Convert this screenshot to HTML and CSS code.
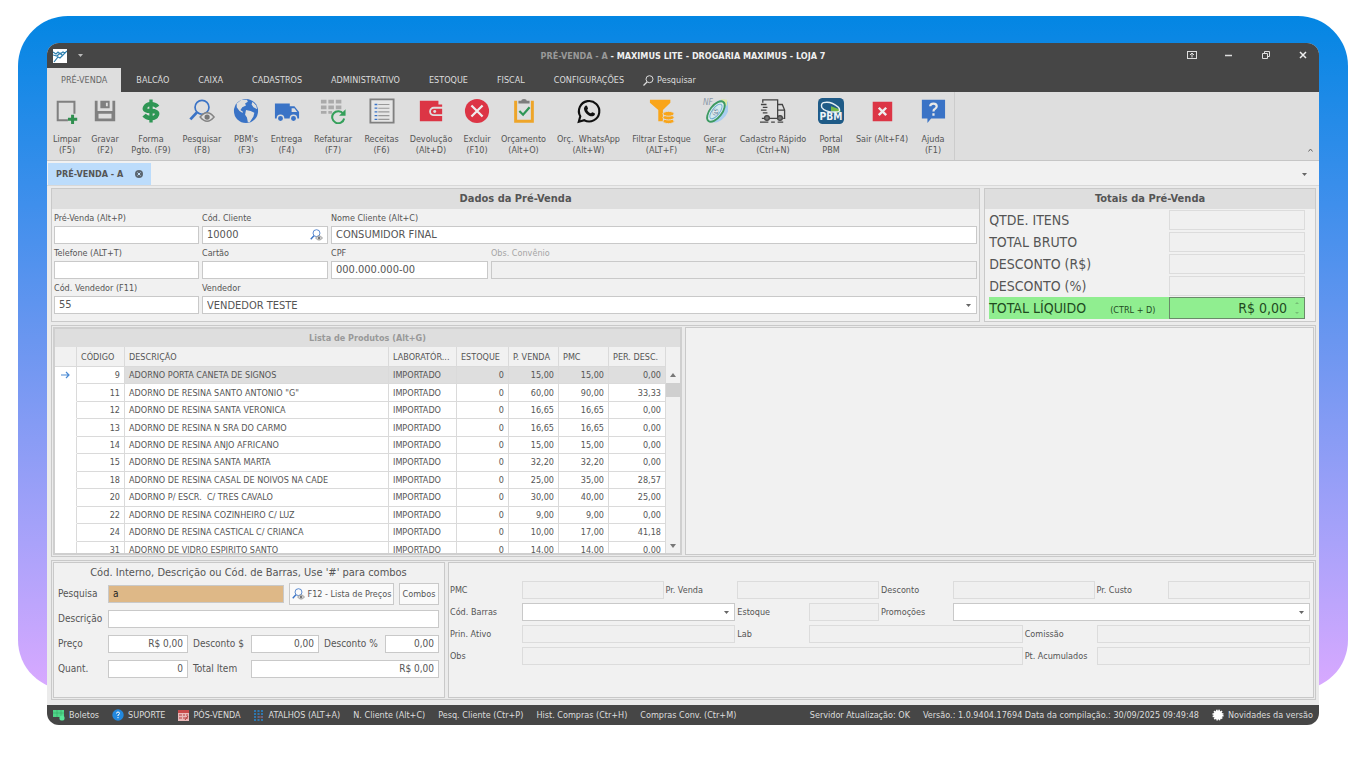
FILE: index.html
```html
<!DOCTYPE html>
<html lang="pt-BR">
<head>
    <meta charset="UTF-8">
    <title>Pré-Venda - Maximus Lite</title>
    <link rel="stylesheet" href="styles.css">
</head>
<body>
    <svg class="defs" width="0" height="0">
        <symbol id="lupa" viewBox="0 0 28 26">
            <circle cx="14" cy="9" r="7.5" fill="none" stroke="#3a73c6" stroke-width="1.8"/>
            <path d="M8.500 14.500L1.500 22" stroke="#3a73c6" stroke-width="3"/>
            <path d="M12 19.500q7.500-9 15 0q-7.500 9-15 0z" fill="#dedede" stroke="#848484" stroke-width="1.600"/>
            <circle cx="19.500" cy="19.500" r="2.800" fill="#777"/>
        </symbol>
    </svg>

    <div class="palco">
        <div class="fundo"></div>
        <main class="janela">
            <header class="topo">
                <div class="titulo-barra">
                    <div class="titulo-esq">
                        <svg width="14" height="14" viewBox="0 0 14 14"><rect width="14" height="14" fill="#fff"/><path d="M0 3l3 2 2-2 2 2 3-2 2 1 2-2M0 6l4 1 3-3 3 3M1 13l4-5 2 1 7-7" fill="none" stroke="#2d7fae" stroke-width="1.200"/></svg>
                        <svg width="5" height="3" viewBox="0 0 5 3"><path d="M0 0h5L2.500 3z" fill="#bbb"/></svg>
                    </div>
                    <div class="titulo"><span>PRÉ-VENDA - A</span> - MAXIMUS LITE - DROGARIA MAXIMUS - LOJA 7</div>
                    <div class="titulo-dir">
                        <button aria-label="Faixa de opções"><svg width="10" height="8" viewBox="0 0 10 8"><rect x=".5" y=".5" width="9" height="7" fill="none" stroke="#ddd"/><path d="M5 6.500V2M3 4l2-2 2 2" fill="none" stroke="#ddd"/></svg></button>
                        <button aria-label="Minimizar"><svg width="8" height="8" viewBox="0 0 8 8"><path d="M0 4.500h7" stroke="#ddd" stroke-width="1.500"/></svg></button>
                        <button aria-label="Restaurar"><svg width="8" height="8" viewBox="0 0 8 8"><path d="M.5 2.500h5v5h-5zM2.500 2.500v-2h5v5h-2" fill="none" stroke="#ddd"/></svg></button>
                        <button aria-label="Fechar"><svg width="8" height="8" viewBox="0 0 8 8"><path d="M1 1l6 6M7 1L1 7" stroke="#eee" stroke-width="1.500"/></svg></button>
                    </div>
                </div>
                <nav class="menu">
                    <button class="ativo">PRÉ-VENDA</button>
                    <button>BALCÃO</button>
                    <button>CAIXA</button>
                    <button>CADASTROS</button>
                    <button>ADMINISTRATIVO</button>
                    <button>ESTOQUE</button>
                    <button>FISCAL</button>
                    <button>CONFIGURAÇÕES</button>
                    <button class="menu-busca"><svg width="11" height="11" viewBox="0 0 11 11"><circle cx="6.500" cy="4.200" r="3.500" fill="none" stroke="#ddd"/><path d="M4 7L.5 10.500" stroke="#ddd" stroke-width="1.300"/></svg>Pesquisar</button>
                </nav>
            </header>

            <div class="faixa">
                <div class="ferramentas">
                    <button>
                        <svg viewBox="0 0 28 28"><path d="M15 24H4V4h18v13" fill="none" stroke="#808080" stroke-width="2.200"/><path d="M20 18v10M15 23h10" stroke="#2f8f4f" stroke-width="3.200"/></svg>
                        <span>Limpar<br>(F5)</span>
                    </button>
                    <button>
                        <svg viewBox="0 0 28 28"><path d="M3 3h3v11h16V3h3v22H3zM7 17v5h14v-5z" fill="#808080" fill-rule="evenodd"/><path d="M9 3h10v8H9zM15 5v4h2V5z" fill="#808080" fill-rule="evenodd"/></svg>
                        <span>Gravar<br>(F2)</span>
                    </button>
                    <button>
                        <svg viewBox="0 0 28 28"><path d="M21 9.500Q19 6.500 14 6.500T7.500 10.200 14 14t6.500 4-6.500 3.700T6.500 18.500" fill="none" stroke="#2f9655" stroke-width="4.600"/><path d="M14 1.500v25" stroke="#2f9655" stroke-width="3.600"/></svg>
                        <span>Forma<br>Pgto. (F9)</span>
                    </button>
                    <button>
                        <svg viewBox="0 0 28 26"><use href="#lupa"/></svg>
                        <span>Pesquisar<br>(F8)</span>
                    </button>
                    <button>
                        <svg viewBox="0 0 28 28"><circle cx="14" cy="14" r="13" fill="#3a73c6"/><path d="M4 6l5-4 6 0 1 2-3 2 1 2-4 2-2 3 3 2-1 1-3-2-3-4zM14 13l5 1 4 2-1 4-4 6-2 0-1-5-2-3zM21 4l4 4 1 4-4-2-2-3z" fill="#dedede"/></svg>
                        <span>PBM's<br>(F3)</span>
                    </button>
                    <button>
                        <svg viewBox="0 0 28 28"><path d="M1 6h16v3h5l5 6v7H1z" fill="#3a73c6"/><path d="M19 11h3l3 4h-6z" fill="#dedede"/><g fill="#3a73c6" stroke="#dedede" stroke-width="1.500"><circle cx="7" cy="22" r="3.400"/><circle cx="21" cy="22" r="3.400"/></g></svg>
                        <span>Entrega<br>(F4)</span>
                    </button>
                    <button>
                        <svg viewBox="0 0 28 28"><path d="M1 2h6v4H1zM9 2h6v4H9zM17 2h6v4h-6zM1 8h6v4H1zM9 8h6v4H9zM17 8h6v4h-6zM1 14h6v3H1zM9 14h4v3H9z" fill="#aaa"/><path d="M25 17a6.500 6.500 0 1 0 1 5" fill="none" stroke="#35a05b" stroke-width="2.200"/><path d="M27.500 12v7h-7z" fill="#35a05b"/></svg>
                        <span>Refaturar<br>(F7)</span>
                    </button>
                    <button>
                        <svg viewBox="0 0 28 28"><path d="M1.500 1.500h25v25h-25z" fill="#e6e6e6" stroke="#808080" stroke-width="2"/><path d="M6 7h3M6 11h3M6 15h3M6 19h3M6 23h3" stroke="#3a73c6" stroke-width="1.400"/><path d="M10 7h12M10 11h12M10 15h12M10 19h12M10 23h12" stroke="#999" stroke-width="1.200"/></svg>
                        <span>Receitas<br>(F6)</span>
                    </button>
                    <button>
                        <svg viewBox="0 0 28 28"><path d="M2 3h20v4h4v18H2z" fill="#dc3545"/><path d="M27 10.500H17a4 4 0 0 0 0 8h10z" fill="#dc3545" stroke="#dedede" stroke-width="2"/><circle cx="18" cy="14.500" r="1.600" fill="#dedede"/></svg>
                        <span>Devolução<br>(Alt+D)</span>
                    </button>
                    <button>
                        <svg viewBox="0 0 28 28"><circle cx="14" cy="14" r="13" fill="#dc3545"/><path d="M8 8l12 12M20 8L8 20" stroke="#eee" stroke-width="2.400"/></svg>
                        <span>Excluir<br>(F10)</span>
                    </button>
                    <button>
                        <svg viewBox="0 0 28 28"><path d="M5 3v22h18V3" fill="#dedede" stroke="#eea529" stroke-width="3.200"/><path d="M8 6V3h3q0-2 3-2t3 2h3v3z" fill="#7d7d7d"/><path d="M9 14l4 4 7-8" fill="none" stroke="#2f9655" stroke-width="2.400"/></svg>
                        <span>Orçamento<br>(Alt+O)</span>
                    </button>
                    <button>
                        <svg viewBox="0 0 28 28"><path d="M3 25.500l1.600-5.800a11 11 0 1 1 4.300 4.200z" fill="none" stroke="#111" stroke-width="2.300"/><path d="M10 8.500c1-.8 1.600-.5 2 .4l.9 2.200c.2.600-.9 1.500-.9 1.900.8 1.700 2 2.700 3.800 3.500.5.200 1.300-1.400 1.900-1.200l2.400 1.200c.9.700-.3 3-2 3.200-4.600.5-9.600-4.500-9.500-8.500.1-1.200.7-2.100 1.400-2.700z" fill="#111"/></svg>
                        <span>Orç.&nbsp; WhatsApp<br>(Alt+W)</span>
                    </button>
                    <button>
                        <svg viewBox="0 0 28 28"><path d="M1 2h22v3l-8 8v12h-5V13L1 5z" fill="#f9a51a"/><g fill="#f9a51a" stroke="#dedede" stroke-width="1"><ellipse cx="21" cy="25" rx="6" ry="2.600"/><ellipse cx="21" cy="21" rx="6" ry="2.600"/><ellipse cx="21" cy="17" rx="6" ry="2.600"/></g></svg>
                        <span>Filtrar Estoque<br>(ALT+F)</span>
                    </button>
                    <button>
                        <svg viewBox="0 0 28 28"><ellipse cx="18" cy="14" rx="9" ry="14" transform="rotate(38 18 14)" fill="#a9cdf0"/><path d="M20 1l7 1v7z" fill="#dfe8a0"/><ellipse cx="15" cy="14.500" rx="6.500" ry="13" transform="rotate(38 15 14.500)" fill="#d5e9ee" stroke="#3d9a62" stroke-width="2"/><ellipse cx="15" cy="14.500" rx="4" ry="9.500" transform="rotate(38 15 14.500)" fill="none" stroke="#6badd0"/><text x="1" y="8" font-size="9" font-style="italic" fill="#8a98a8">NF</text><text x="11" y="18" font-size="11" font-weight="bold" fill="#fff" stroke="#6889a0" stroke-width=".5">e</text></svg>
                        <span>Gerar<br>NF-e</span>
                    </button>
                    <button>
                        <svg viewBox="0 0 28 28"><path d="M3 5V2h16v20H10M5 22H2M19 7h5l2.500 6v9H25M19 13h7M19 22h-1M1 7h6M3 10h5M1 13h6M3 16h5M0 26h9M12 26h4M19 26h6" fill="none" stroke="#444" stroke-width="1.400"/><circle cx="7.500" cy="21.500" r="2.600" fill="#777" stroke="#444" stroke-width="1.400"/><circle cx="21.500" cy="21.500" r="2.600" fill="#777" stroke="#444" stroke-width="1.400"/></svg>
                        <span>Cadastro Rápido<br>(Ctrl+N)</span>
                    </button>
                    <button>
                        <svg viewBox="0 0 28 28"><rect width="28" height="28" rx="5" fill="#1f5b87"/><path d="M14 9l9 3q3 3-1 4l-8-2z" fill="#76b947"/><path d="M6 5q8-2 16 5 3 4-1 5Q8 16 4 10q-1-4 2-5z" fill="none" stroke="#e4eef4" stroke-width="1.500"/><text x="14" y="24" font-size="11" font-weight="bold" fill="#eef3f7" text-anchor="middle">PBM</text></svg>
                        <span>Portal<br>PBM</span>
                    </button>
                    <button>
                        <svg viewBox="0 0 28 28"><path d="M4 4h21v21H4z" fill="#dc3545"/><path d="M10.500 10.500l8 8M18.500 10.500l-8 8" stroke="#eee" stroke-width="2.600"/></svg>
                        <span>Sair (Alt+F4)</span>
                    </button>
                    <button>
                        <svg viewBox="0 0 28 28"><path d="M2 2h25v20H12l-4 5v-5H2z" fill="#3a73c6"/><path d="M11 9q0-3 3.500-3T18 9q0 1.800-2 2.800-1.500.7-1.500 2.700M14.500 16.500v2.500" fill="none" stroke="#e8e8e8" stroke-width="2.400"/></svg>
                        <span>Ajuda<br>(F1)</span>
                    </button>
                </div>
                <svg class="recolher" width="5" height="4" viewBox="0 0 5 4"><path d="M.5 3.500l2-2.500 2 2.500" fill="none" stroke="#666"/></svg>
            </div>

            <div class="abas">
                <button class="aba">PRÉ-VENDA - A <svg width="8" height="8" viewBox="0 0 8 8"><circle cx="4" cy="4" r="4" fill="#5b6670"/><path d="M2.500 2.500l3 3M5.500 2.500l-3 3" stroke="#c3e0fb"/></svg></button>
                <svg width="5" height="3" viewBox="0 0 5 3"><path d="M0 0h5L2.500 3z" fill="#666"/></svg>
            </div>

            <div class="conteudo">
                <div class="linha-topo">
                    <section class="painel">
                        <h2>Dados da Pré-Venda</h2>
                        <div class="dados">
                            <label>Pré-Venda (Alt+P)<input type="text"></label>
                            <label class="com-lupa">Cód. Cliente<input type="text" value="10000"><svg width="13" height="12"><use href="#lupa"/></svg></label>
                            <label class="c2">Nome Cliente (Alt+C)<input type="text" value="CONSUMIDOR FINAL"></label>
                            <label>Telefone (ALT+T)<input type="text"></label>
                            <label>Cartão<input type="text"></label>
                            <label>CPF<input type="text" value="000.000.000-00"></label>
                            <label class="inativo">Obs. Convênio<input type="text" disabled></label>
                            <label>Cód. Vendedor (F11)<input type="text" value="55"></label>
                            <label class="c3">Vendedor<select><option>VENDEDOR TESTE</option></select></label>
                        </div>
                    </section>
                    <section class="painel">
                        <h2>Totais da Pré-Venda</h2>
                        <div class="totais">
                            <label for="qtde">QTDE. ITENS</label><input id="qtde" type="text" disabled>
                            <label for="bruto">TOTAL BRUTO</label><input id="bruto" type="text" disabled>
                            <label for="desc-rs">DESCONTO (R$)</label><input id="desc-rs" type="text" disabled>
                            <label for="desc-pc">DESCONTO (%)</label><input id="desc-pc" type="text" disabled>
                            <label for="liquido" class="liquido">TOTAL LÍQUIDO <small>(CTRL + D)</small></label><input id="liquido" class="liquido" type="text" value="R$ 0,00">
                        </div>
                    </section>
                </div>

                <div class="linha-meio">
                    <section class="lista">
                        <h2>Lista de Produtos (Alt+G)</h2>
                        <div class="lista-corpo">
                            <table>
                                <colgroup><col class="w-seta"><col class="w-cod"><col><col class="w-lab"><col class="w-est"><col class="w-val"><col class="w-val"><col class="w-per"></colgroup>
                                <thead>
                                    <tr><th></th><th>CÓDIGO</th><th>DESCRIÇÃO</th><th>LABORATÓR...</th><th>ESTOQUE</th><th>P. VENDA</th><th>PMC</th><th>PER. DESC.</th></tr>
                                </thead>
                                <tbody>
                                    <tr class="sel"><td><svg width="9" height="8" viewBox="0 0 9 8"><path d="M0 4h8M5 1l3 3-3 3" fill="none" stroke="#4a8ad4" stroke-width="1.200"/></svg></td><td>9</td><td>ADORNO PORTA CANETA DE SIGNOS</td><td>IMPORTADO</td><td>0</td><td>15,00</td><td>15,00</td><td>0,00</td></tr>
                                    <tr><td></td><td>11</td><td>ADORNO DE RESINA SANTO ANTONIO "G"</td><td>IMPORTADO</td><td>0</td><td>60,00</td><td>90,00</td><td>33,33</td></tr>
                                    <tr><td></td><td>12</td><td>ADORNO DE RESINA SANTA VERONICA</td><td>IMPORTADO</td><td>0</td><td>16,65</td><td>16,65</td><td>0,00</td></tr>
                                    <tr><td></td><td>13</td><td>ADORNO DE RESINA N SRA DO CARMO</td><td>IMPORTADO</td><td>0</td><td>16,65</td><td>16,65</td><td>0,00</td></tr>
                                    <tr><td></td><td>14</td><td>ADORNO DE RESINA ANJO AFRICANO</td><td>IMPORTADO</td><td>0</td><td>15,00</td><td>15,00</td><td>0,00</td></tr>
                                    <tr><td></td><td>15</td><td>ADORNO DE RESINA SANTA MARTA</td><td>IMPORTADO</td><td>0</td><td>32,20</td><td>32,20</td><td>0,00</td></tr>
                                    <tr><td></td><td>18</td><td>ADORNO DE RESINA CASAL DE NOIVOS NA CADE</td><td>IMPORTADO</td><td>0</td><td>25,00</td><td>35,00</td><td>28,57</td></tr>
                                    <tr><td></td><td>20</td><td>ADORNO P/ ESCR.&nbsp; C/ TRES CAVALO</td><td>IMPORTADO</td><td>0</td><td>30,00</td><td>40,00</td><td>25,00</td></tr>
                                    <tr><td></td><td>22</td><td>ADORNO DE RESINA COZINHEIRO C/ LUZ</td><td>IMPORTADO</td><td>0</td><td>9,00</td><td>9,00</td><td>0,00</td></tr>
                                    <tr><td></td><td>24</td><td>ADORNO DE RESINA CASTICAL C/ CRIANCA</td><td>IMPORTADO</td><td>0</td><td>10,00</td><td>17,00</td><td>41,18</td></tr>
                                    <tr><td></td><td>31</td><td>ADORNO DE VIDRO ESPIRITO SANTO</td><td>IMPORTADO</td><td>0</td><td>14,00</td><td>14,00</td><td>0,00</td></tr>
                                </tbody>
                            </table>
                            <div class="rolagem">
                                <svg width="6" height="4" viewBox="0 0 6 4"><path d="M0 4h6L3 0z" fill="#777"/></svg>
                                <i></i>
                                <svg width="6" height="4" viewBox="0 0 6 4"><path d="M0 0h6L3 4z" fill="#777"/></svg>
                            </div>
                        </div>
                    </section>
                    <section class="painel"></section>
                </div>

                <div class="linha-base">
                    <section class="painel item">
                        <p>Cód. Interno, Descrição ou Cód. de Barras, Use '#' para combos</p>
                        <div class="item-linha busca">
                            <label for="pesquisa">Pesquisa</label>
                            <input id="pesquisa" type="text" value="a">
                            <button><svg width="13" height="12"><use href="#lupa"/></svg>F12 - Lista de Preços</button>
                            <button>Combos</button>
                        </div>
                        <div class="item-linha descricao">
                            <label for="descricao">Descrição</label>
                            <input id="descricao" type="text">
                        </div>
                        <div class="item-linha valores">
                            <label for="preco">Preço</label>
                            <input id="preco" type="text" value="R$ 0,00">
                            <label for="d-rs">Desconto $</label>
                            <input id="d-rs" type="text" value="0,00">
                            <label for="d-pc">Desconto %</label>
                            <input id="d-pc" type="text" value="0,00">
                        </div>
                        <div class="item-linha quantidade">
                            <label for="quant">Quant.</label>
                            <input id="quant" type="text" value="0">
                            <label for="total">Total Item</label>
                            <input id="total" type="text" value="R$ 0,00">
                        </div>
                    </section>
                    <section class="painel detalhes">
                        <label for="pmc">PMC</label><input id="pmc" class="s2" type="text" disabled>
                        <label for="venda">Pr. Venda</label><input id="venda" class="s2" type="text" disabled>
                        <label for="desconto">Desconto</label><input id="desconto" class="s2" type="text" disabled>
                        <label for="custo">Pr. Custo</label><input id="custo" class="s2" type="text" disabled>
                        <label for="barras">Cód. Barras</label><select id="barras" class="s3"></select>
                        <label for="estoque">Estoque</label><input id="estoque" type="text" disabled>
                        <label for="promo">Promoções</label><select id="promo" class="s5"></select>
                        <label for="ativo">Prin. Ativo</label><input id="ativo" class="s3" type="text" disabled>
                        <label for="lab">Lab</label><input id="lab" class="s3" type="text" disabled>
                        <label for="comissao">Comissão</label><input id="comissao" class="s3" type="text" disabled>
                        <label for="obs">Obs</label><input id="obs" class="s7" type="text" disabled>
                        <label for="pontos">Pt. Acumulados</label><input id="pontos" class="s3" type="text" disabled>
                    </section>
                </div>
            </div>

            <footer class="status">
                <button><svg width="12" height="12" viewBox="0 0 12 12"><path d="M0 1h11v7H0z" fill="#4fd689"/><path d="M0 4h11M4 1v7M8 1v7" stroke="#35a866" stroke-width=".6"/><circle cx="9" cy="9" r="2.600" fill="#58e697"/></svg>Boletos</button>
                <button><svg width="12" height="12" viewBox="0 0 12 12"><circle cx="6" cy="6" r="5.700" fill="#2288de"/><path d="M4.500 4.500Q4.500 3 6 3t1.500 1.500Q7.500 5.500 6 6v1M6 8v1.200" fill="none" stroke="#fff"/></svg>SUPORTE</button>
                <button><svg width="11" height="11" viewBox="0 0 11 11"><path d="M0 0h11v11H0z" fill="#eab9b9"/><path d="M0 0h11v3H0z" fill="#c94b4b"/><path d="M1 5h3M5 5h2M8 5h2M1 8h3M5 8h5M7 10l3-4" stroke="#b33c3c"/></svg>PÓS-VENDA</button>
                <button class="atalhos"><svg width="9" height="11" viewBox="0 0 9 11"><path d="M1 0v11M4.500 0v11M8 0v11" stroke="#2e78b0" stroke-width="2" stroke-dasharray="2 1"/><path d="M4 7h5" stroke="#a35252"/></svg>ATALHOS (ALT+A)</button>
                <button>N. Cliente (Alt+C)</button>
                <button>Pesq. Cliente (Ctr+P)</button>
                <button>Hist. Compras (Ctr+H)</button>
                <button>Compras Conv. (Ctr+M)</button>
                <span class="servidor">Servidor Atualização: OK</span>
                <span>Versão.: 1.0.9404.17694 Data da compilação.: 30/09/2025 09:49:48</span>
                <button><svg width="12" height="12" viewBox="0 0 12 12"><circle cx="6" cy="6" r="4.500" fill="#fff"/><circle cx="6" cy="6" r="4.800" fill="none" stroke="#fff" stroke-width="1.600" stroke-dasharray="1.500 1"/></svg>Novidades da versão</button>
            </footer>
        </main>
    </div>
</body>
</html>
```
FILE: styles.css
```css
* {
    box-sizing: border-box;
}

body {
    margin: 0;
    padding: 16px 18px;
    background: #fff;
    color: #555;
    font-family: "DejaVu Sans Condensed", "Noto Sans", sans-serif;
    font-size: 9px;
}

button, input, select {
    font: inherit;
    color: inherit;
}

button {
    border: none;
    background: none;
    padding: 0;
    white-space: nowrap;
    cursor: pointer;
}

h2, p {
    margin: 0;
}

.defs {
    display: none;
}

/* moldura com gradiente atrás da janela */
.palco {
    display: grid;
}

.fundo, .janela {
    grid-area: 1 / 1;
    min-width: 0;
}

.fundo {
    margin-bottom: 35px;
    border-radius: 50px;
    background: linear-gradient(#0386e3, #3f8fec 28%, #6a96f0 48%, #a9a2fa 78%, #d9a9ff);
}

.janela {
    margin: 27px 29px 0;
    border-radius: 12px;
    overflow: hidden;
    background: #ebebeb;
}

/* topo */
.topo {
    background: #464646;
    color: #ddd;
}

.titulo-barra {
    display: grid;
    grid-template-columns: 1fr auto 1fr;
    align-items: center;
    height: 25px;
}

.titulo-esq {
    display: flex;
    align-items: center;
    gap: 11px;
    padding-left: 6px;
}

.titulo {
    font-weight: bold;
    color: #f0f0f0;
}

.titulo span {
    color: #999;
}

.titulo-dir {
    display: flex;
    justify-content: flex-end;
    gap: 5px;
}

.titulo-dir button {
    width: 32px;
}

.menu {
    display: flex;
    gap: 1px;
    height: 24px;
}

.menu button {
    padding: 0 14px;
}

.menu .ativo {
    background: #dedede;
    color: #666;
}

.menu .menu-busca {
    display: flex;
    align-items: center;
    gap: 3px;
    padding: 0 4px;
}

.faixa {
    display: flex;
    justify-content: space-between;
    align-items: flex-end;
    height: 69px;
    background: #dedede;
    border-bottom: 1px solid #c6c6c6;
}

.ferramentas {
    display: grid;
    grid-template-columns: 36px 40px 52px 50px 38px 43px 50px 47px 52px 40px 53px 77px 69px 38px 78px 38px 64px 38px;
    height: 100%;
    padding: 6px 2px 0;
    border-right: 1px solid #ccc;
}

.ferramentas button {
    display: flex;
    flex-direction: column;
    align-items: center;
    gap: 10px;
    line-height: 11px;
}

.ferramentas svg {
    width: 26px;
    height: 26px;
}

.recolher {
    margin: 0 6px 8px 0;
}

.abas {
    display: flex;
    justify-content: space-between;
    align-items: center;
    height: 25px;
    padding: 2px 12px 0 1px;
    background: #f1f1f1;
    border-bottom: 1px solid #d8d8d8;
}

.aba {
    display: flex;
    align-items: center;
    gap: 12px;
    align-self: stretch;
    padding: 0 8px;
    background: #bcdcfb;
    font-weight: bold;
}

/* conteúdo */
.conteudo {
    display: flex;
    flex-direction: column;
    gap: 3px;
    padding: 2px 3px 5px 4px;
}

.painel {
    min-width: 0;
    background: #f1f1f1;
    border: 1px solid #c9c9c9;
}

.painel h2 {
    height: 20px;
    line-height: 20px;
    background: #dedede;
    font-size: 11px;
    text-align: center;
}

input, select {
    width: 100%;
    min-width: 0;
    height: 18px;
    padding: 0 4px;
    border: 1px solid #c9c9c9;
    border-radius: 0;
    background: #fff;
}

input:disabled {
    background: #f0f0f0;
    border-color: #dcdcdc;
}

select {
    appearance: none;
    background: #fff url("data:image/svg+xml,%3Csvg xmlns='http://www.w3.org/2000/svg' width='5' height='3'%3E%3Cpath d='M0 0h5L2.500 3z' fill='%23666'/%3E%3C/svg%3E") no-repeat right 5px center;
}

.linha-topo {
    display: grid;
    grid-template-columns: 14fr 5fr;
    gap: 4px;
}

.dados {
    display: grid;
    grid-template-columns: 145px 126px 157px 1fr;
    gap: 0 3px;
    padding: 0 2px 7px;
}

.dados label {
    display: grid;
    grid-template-rows: 17px 18px;
    line-height: 18px;
}

.dados input, .dados select {
    font-size: 11px;
}

.c2 {
    grid-column: span 2;
}

.c3 {
    grid-column: span 3;
}

.dados .com-lupa {
    grid-template-columns: 1fr 18px;
}

.com-lupa input {
    grid-area: 2 / 1 / 3 / 3;
}

.com-lupa svg {
    grid-area: 2 / 2;
    align-self: center;
    z-index: 1;
}

.inativo {
    color: #a5a5a5;
}

.dados .inativo input {
    border-color: #c9c9c9;
}

.totais {
    display: grid;
    grid-template-columns: 1fr 136px;
    grid-auto-rows: 22px;
    align-items: center;
    padding: 0 10px 0 4px;
    font-size: 14px;
}

.totais label {
    line-height: 22px;
}

.totais input {
    height: 20px;
}

.totais .liquido {
    height: 22px;
    background-color: #90ee90;
    color: #1f4a1f;
}

.totais input.liquido {
    padding-right: 17px;
    border-color: #6a8a6a;
    text-align: right;
    background-image: url("data:image/svg+xml,%3Csvg xmlns='http://www.w3.org/2000/svg' width='4' height='12'%3E%3Cpath d='M0 2l2-2 2 2zM0 10l2 2 2-2z' fill='%2375bd75'/%3E%3C/svg%3E");
    background-repeat: no-repeat;
    background-position: right 5px center;
}

.totais small {
    margin-left: 20px;
    font-size: 9px;
}

.linha-meio, .linha-base {
    display: grid;
    gap: 3px;
    padding: 1px;
    border: 1px solid #c9c9c9;
}

.linha-meio {
    grid-template-columns: 1fr 1fr;
}

.linha-base {
    grid-template-columns: 392px 1fr;
}

.lista {
    min-width: 0;
    border: 2px solid #cfcfcf;
    background: #f1f1f1;
}

.lista h2 {
    height: 18px;
    line-height: 18px;
    background: #dedede;
    color: #999;
    font-size: 9px;
    text-align: center;
}

.lista-corpo {
    display: flex;
    height: 206px;
    overflow: hidden;
}

table {
    flex: 1;
    min-width: 0;
    height: 212px;
    border-collapse: separate;
    border-spacing: 0;
    table-layout: fixed;
}

th, td {
    padding: 0 4px;
    border-right: 1px solid #dadada;
    border-bottom: 1px solid #dadada;
    white-space: nowrap;
    overflow: hidden;
}

th {
    height: 20px;
    font-weight: normal;
    text-align: left;
}

td {
    background: #fff;
    text-align: right;
}

td:first-child {
    border-bottom-color: #fff;
    text-align: center;
}

td:nth-child(3), td:nth-child(4) {
    text-align: left;
}

.sel td:nth-child(n+3) {
    background: #dedede;
}

td svg {
    display: block;
    margin: 0 auto;
}

.w-seta { width: 22px; }
.w-cod { width: 48px; }
.w-lab { width: 68px; }
.w-est { width: 52px; }
.w-val { width: 50px; }
.w-per { width: 57px; }

.rolagem {
    display: flex;
    flex-direction: column;
    align-items: center;
    width: 14px;
    padding: 26px 0 5px;
}

.rolagem i {
    width: 100%;
    height: 14px;
    margin: 6px 0 auto;
    background: #cfcfcf;
}

/* item da venda */
.item {
    display: flex;
    flex-direction: column;
    padding: 2px 5px 16px 4px;
    font-size: 10px;
}

.item p {
    height: 16px;
    line-height: 16px;
    font-size: 11px;
    text-align: center;
}

.item-linha {
    display: grid;
    align-items: center;
    gap: 5px;
    height: 25px;
    white-space: nowrap;
}

.busca {
    grid-template-columns: 45px 1fr 105px 40px;
}

.descricao {
    grid-template-columns: 45px 1fr;
}

.valores {
    grid-template-columns: 45px 80px 53px 68px 56px 54px;
}

.quantidade {
    grid-template-columns: 45px 80px 53px 1fr;
}

.valores input, .quantidade input {
    text-align: right;
}

.busca #pesquisa {
    background: #deb887;
    color: #222;
}

.busca button {
    display: flex;
    align-items: center;
    justify-content: center;
    gap: 3px;
    height: 22px;
    border: 1px solid #c9c9c9;
    background: #fafafa;
    font-size: 9px;
}

.detalhes {
    display: grid;
    grid-template-columns: repeat(12, 1fr);
    grid-auto-rows: 18px;
    align-content: start;
    align-items: center;
    gap: 4px 2px;
    padding: 18px 3px 0 1px;
    white-space: nowrap;
}

.s2 { grid-column: span 2; }
.s3 { grid-column: span 3; }
.s5 { grid-column: span 5; }
.s7 { grid-column: span 7; }

/* barra de status */
.status {
    display: flex;
    align-items: center;
    gap: 13px;
    height: 20px;
    padding: 0 6px;
    background: #464646;
    color: #ddd;
    white-space: nowrap;
}

.status button {
    display: flex;
    align-items: center;
    gap: 4px;
}

.status .atalhos {
    gap: 6px;
}

.servidor {
    margin-left: auto;
}
```
